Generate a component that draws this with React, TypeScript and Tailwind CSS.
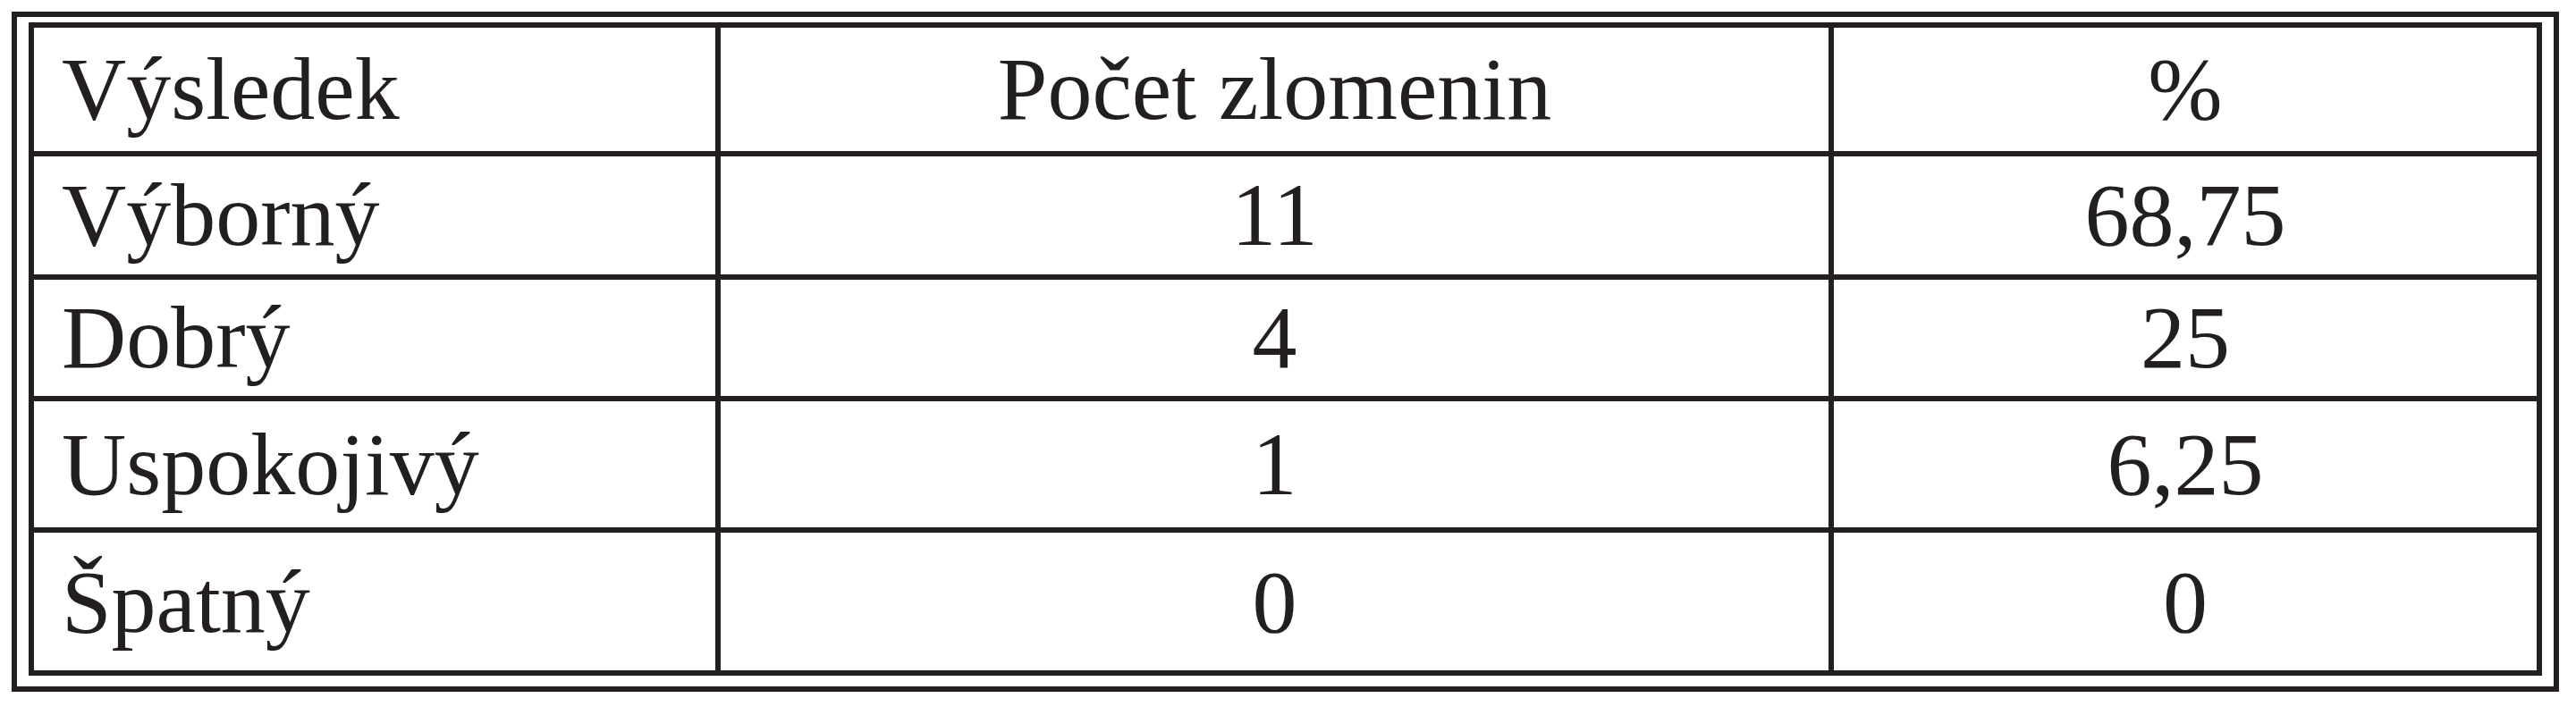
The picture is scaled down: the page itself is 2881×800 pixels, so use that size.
const rows = [
  { label: 'Výsledek', count: 'Počet zlomenin', pct: '%', h: 'h-[144px]' },
  { label: 'Výborný', count: '11', pct: '68,75', h: 'h-[138px]' },
  { label: 'Dobrý', count: '4', pct: '25', h: 'h-[136px]' },
  { label: 'Uspokojivý', count: '1', pct: '6,25', h: 'h-[147px]' },
  { label: 'Špatný', count: '0', pct: '0', h: 'flex-1' },
];

export default function App() {
  return (
    <div className="h-[800px] w-[2881px] bg-white pl-[13px] pt-[13px] font-['Liberation_Serif',serif] text-[100px] leading-none text-[#231f20]">
      <div className="box-border h-[761px] w-[2849px] border-[6px] border-[#231f20] px-[13px] pb-[12px] pt-[6px]">
        <div className="box-border flex h-full flex-col border-[6px] border-[#231f20]">
          {rows.map((r, i) => {
            const last = i === rows.length - 1;
            const cell = last ? 'items-start pt-[28px]' : 'items-center';
            return (
              <div key={r.label} className={`flex ${r.h} ${last ? '' : 'border-b-[6px] border-[#231f20]'}`}>
                <div className={`flex w-[768px] border-r-[6px] border-[#231f20] pl-[31px] ${cell}`}>
                  <span>{r.label}</span>
                </div>
                <div className={`flex w-[1245px] justify-center border-r-[6px] border-[#231f20] ${cell}`}>
                  <span>{r.count}</span>
                </div>
                <div className={`flex flex-1 justify-center ${cell}`}>
                  <span>{r.pct}</span>
                </div>
              </div>
            );
          })}
        </div>
      </div>
    </div>
  );
}
